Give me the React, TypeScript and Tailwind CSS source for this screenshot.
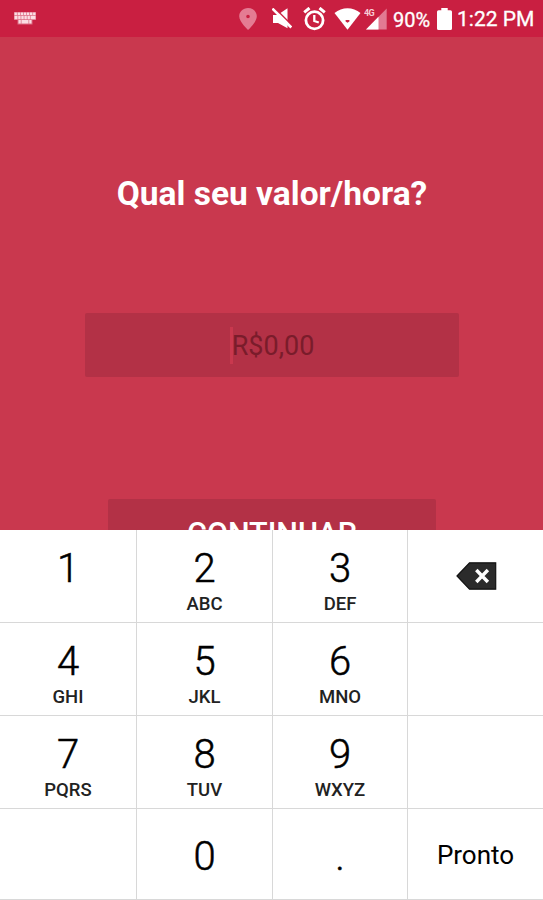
import { useState } from "react";

type Key = {
	value: string;
	letters?: string;
};

const keyRows: Key[][] = [
	[{ value: "1", letters: "" }, { value: "2", letters: "ABC" }, { value: "3", letters: "DEF" }, { value: "del" }],
	[{ value: "4", letters: "GHI" }, { value: "5", letters: "JKL" }, { value: "6", letters: "MNO" }, { value: "" }],
	[{ value: "7", letters: "PQRS" }, { value: "8", letters: "TUV" }, { value: "9", letters: "WXYZ" }, { value: "" }],
	[{ value: "" }, { value: "0" }, { value: "." }, { value: "Pronto" }],
];

const KeyboardIcon = () => (
	<svg width="22" height="13" viewBox="0 0 22 13" fill="#fbdde3">
		<path d="M0 0h22v8h-3.500v4.500h-15V8H0z" fill="#e9a0b0" opacity=".6" />
		<path d="M.5.5h2.400v2.400H.5zM3.600.5H6v2.400H3.600zM6.700.5h2.400v2.400H6.700zM9.800.5h2.400v2.400H9.800zM12.900.5h2.400v2.400h-2.400zM16 .5h2.400v2.400H16zM19.100.5h2.400v2.400h-2.400z" />
		<path d="M.5 3.700h3v3.600h-3zM4.200 3.700h2.400v3.600H4.200zM7.300 3.700h2.400v3.600H7.300zM10.400 3.700h2.400v3.600h-2.400zM13.500 3.700h2.400v3.600h-2.400zM16.600 3.700h4.900v3.600h-4.900z" />
		<path d="M4.500 8.100h2.300v3.400H4.500zM7.500 8.100h7v3.400h-7zM15.200 8.100h2.300v3.400h-2.300z" />
	</svg>
);

const LocationIcon = () => (
	<svg width="18" height="22" viewBox="0 0 18 22">
		<path
			d="M9 0C4 0 .2 3.700.2 8.300.2 14 9 22 9 22s8.800-8 8.800-13.700C17.800 3.700 14 0 9 0zm0 6.700a1.800 1.800 0 1 1 0 3.600 1.800 1.800 0 0 1 0-3.600z"
			fill="#e47c93"
			fillRule="evenodd"
		/>
	</svg>
);

const MuteIcon = () => (
	<svg width="20" height="21" viewBox="0 0 20 21">
		<path d="M1 7h4.500L15.500.3v20L6 15H1z" fill="#fff" />
		<path d="M1.900-.8 20.400 17.700" stroke="#c91f41" strokeWidth="1.500" />
		<path d="M.4 .6 19.300 19.500" stroke="#fff" strokeWidth="2.600" />
	</svg>
);

const AlarmIcon = () => (
	<svg width="23" height="24" viewBox="0 0 23 24" fill="none" stroke="#fff">
		<circle cx="11.500" cy="13.300" r="8.600" strokeWidth="2.800" />
		<path d="M1.200 5.300 6.500 1M21.800 5.300 16.500 1" strokeWidth="3" />
		<path d="M11.300 8v6l4.500 1.500" strokeWidth="2.300" />
	</svg>
);

const WifiIcon = () => (
	<svg width="27" height="22" viewBox="0 0 27 22">
		<path d="M.5 5C8-1.300 19-1.300 26.500 5L13.500 21.700z" fill="#fff" />
		<path d="M11.600 12h3.800v1.400l-1.900 1.300-1.900-1.300z" fill="#c91f41" />
	</svg>
);

const SignalIcon = () => (
	<svg width="23" height="22" viewBox="0 0 23 22">
		<path d="M22.700.5v21H2z" fill="#e27a92" />
		<path d="M14.500 8.800v12.700H2z" fill="#fff" />
		<text x="0" y="8" fontSize="9" fontWeight="700" fill="#f8cdd6" letterSpacing="-.6">
			4G
		</text>
	</svg>
);

const BatteryIcon = () => (
	<svg width="15" height="22" viewBox="0 0 14 22" preserveAspectRatio="none" fill="#fff">
		<path d="M4 0h6v2.300h2.500q1.500 0 1.500 1.500v16.700q0 1.500-1.500 1.500h-11Q0 22 0 20.500V3.800q0-1.500 1.500-1.500H4z" />
	</svg>
);

const DeleteIcon = () => (
	<svg className="ml-[2px]" width="41" height="28" viewBox="0 0 41 28">
		<path d="M1 14 13.500.8h26.200v26.400H13.500z" fill="#2b2b2b" stroke="#111" strokeWidth="1.200" />
		<path d="m20.300 8 11.600 12M31.900 8 20.300 20" stroke="#fff" strokeWidth="3.400" />
	</svg>
);

const StatusBar = () => (
	<header className="flex h-[37px] shrink-0 items-center bg-[#c91f41] pr-[9px] pl-[14px] text-white">
		<KeyboardIcon />
		<div className="ml-auto flex items-center">
			<LocationIcon />
			<div className="ml-[15px]">
				<MuteIcon />
			</div>
			<div className="ml-[11px]">
				<AlarmIcon />
			</div>
			<div className="ml-[8px]">
				<WifiIcon />
			</div>
			<div className="ml-[3px]">
				<SignalIcon />
			</div>
			<span className="ml-[6px] w-[39px] pt-[2px] text-[20px] leading-none whitespace-nowrap [-webkit-text-stroke:0.3px]">
				90%
			</span>
			<div className="ml-[5px]">
				<BatteryIcon />
			</div>
			<span className="ml-[5px] w-[77px] pt-[2px] text-[21px] leading-none whitespace-nowrap [-webkit-text-stroke:0.3px]">
				1:22 PM
			</span>
		</div>
	</header>
);

const KeyContent = ({ item }: { item: Key }) => {
	if (item.value === "del") return <DeleteIcon />;
	if (item.value === "Pronto") return <span className="pt-[2px] text-[26px] leading-none">Pronto</span>;
	if (item.letters === undefined) {
		return (
			<span className="pt-[6px] text-[40px] leading-[46px] font-light [-webkit-text-stroke:0.5px]">{item.value}</span>
		);
	}

	return (
		<>
			<span className="pt-[9px] text-[40px] leading-[46px] font-light [-webkit-text-stroke:0.5px]">{item.value}</span>
			<span className="mt-px h-[22px] text-[18.500px] leading-[22px] font-medium text-[#222]">{item.letters}</span>
		</>
	);
};

const App: React.FC = () => {
	const [value, setValue] = useState("");

	const handleKey = (key: string) => {
		if (key === "del") setValue(value.slice(0, -1));
		else if (key !== "Pronto") setValue(value + key);
	};

	return (
		<div className="flex h-[900px] w-[543px] flex-col overflow-hidden bg-[#c9384e] font-[Roboto,sans-serif]">
			<StatusBar />
			<main className="flex h-[493px] shrink-0 flex-col items-center overflow-hidden">
				<h1 className="mt-[137px] ml-px text-[33.500px] leading-[40px] font-bold whitespace-nowrap text-white">
					Qual seu valor/hora?
				</h1>
				<div className="mt-[99px] ml-px flex h-[64px] w-[374px] shrink-0 items-center justify-center rounded-[2px] bg-[#b33146]">
					<span className="h-[37px] w-[3px] bg-[#c9384e]"></span>
					<span className="-ml-px pt-[2px] text-[27px] leading-none text-[#7a1c2b]">{value || "R$0,00"}</span>
				</div>
				<button className="mt-[122px] ml-px h-[64px] w-[328px] shrink-0 rounded-[2px] bg-[#b33146] pt-[5px] text-[30.500px] font-medium text-white">
					CONTINUAR
				</button>
			</main>
			<section className="grid h-[370px] shrink-0 grid-cols-[137px_136px_135px_135px] grid-rows-[93px_93px_93px_91px] bg-white text-black">
				{keyRows.flat().map((item, index) => (
					<button
						key={index}
						onClick={() => handleKey(item.value)}
						className="flex flex-col items-center justify-center border-r border-b border-[#d8d8d8] nth-[4n]:border-r-0"
					>
						<KeyContent item={item} />
					</button>
				))}
			</section>
		</div>
	);
};

export default App;
